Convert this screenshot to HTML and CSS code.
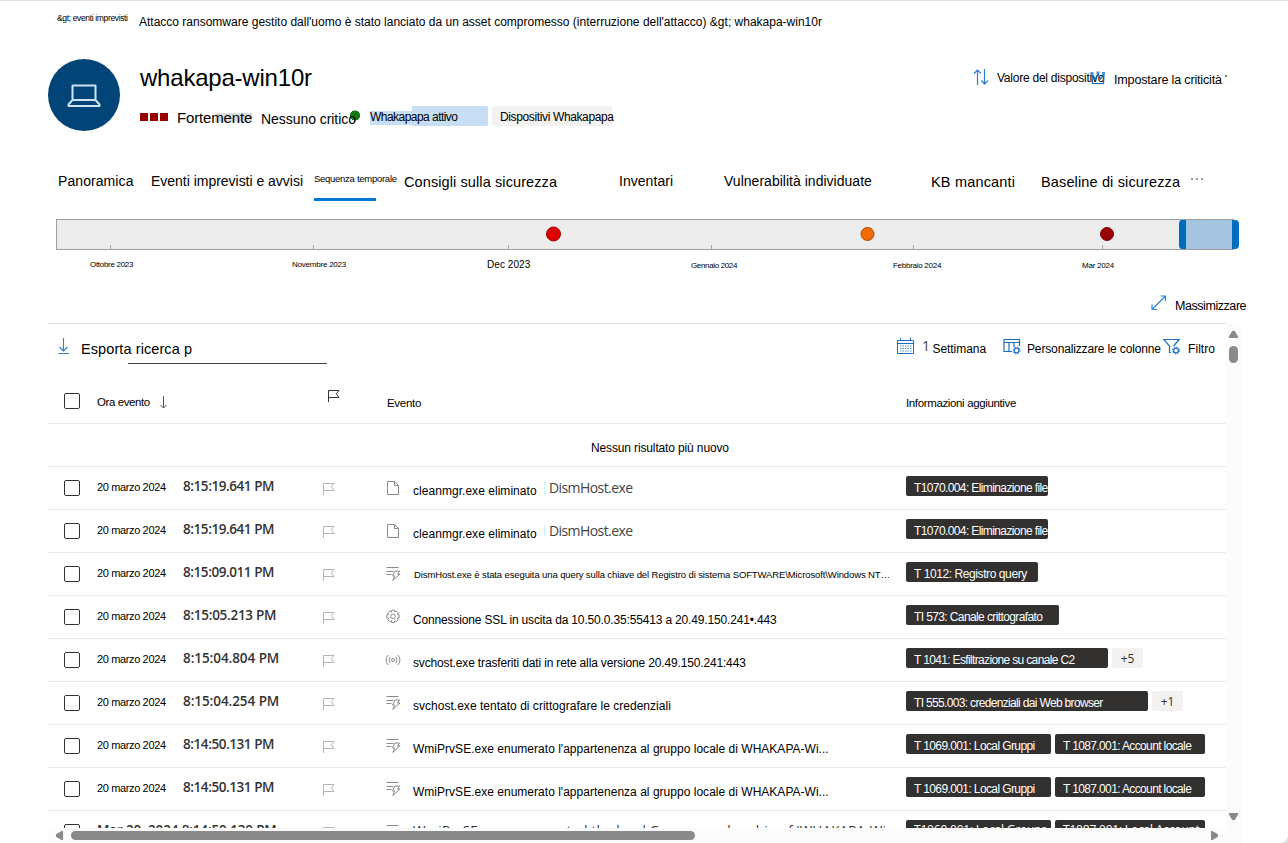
FILE: index.html
```html
<!DOCTYPE html>
<html lang="it">
<head>
<meta charset="utf-8">
<title>whakapa-win10r</title>
<link rel="stylesheet" href="styles.css">
</head>
<body>
<svg class="defs" aria-hidden="true">
  <symbol id="flag" viewBox="0 0 12 14"><path d="M.5 13V1.500H11L8.300 4.700L11 8.500H.5" fill="none" stroke="currentColor"/></symbol>
  <symbol id="doc" viewBox="0 0 14 16"><path d="M1.500 1.500H8.500L12.500 5.500V14.500H1.500ZM8.500 1.500V5.500H12.500" fill="none" stroke="currentColor"/></symbol>
  <symbol id="bolt" viewBox="0 0 15 16"><path d="M.5 1.500H12.500M.5 5.500H7.500M.5 8.500H5.500" fill="none" stroke="currentColor" stroke-width="1.200"/><path d="M9 5H13.500L11.500 8H14L6.800 14.500L8.700 10H6.500Z" fill="none" stroke="currentColor"/></symbol>
  <symbol id="gear" viewBox="0 0 16 16"><path d="M6.700 1.200h2.600l.4 1.900 1.700-1.100 1.900 1.800-1.100 1.700 2 .5v2.600l-2 .5 1.100 1.700-1.900 1.900-1.700-1.100-.4 1.900H6.700l-.4-1.900-1.700 1.100-1.900-1.900 1.100-1.700-2-.5V6l2-.5-1.100-1.700 1.900-1.800 1.700 1.100Z" fill="none" stroke="currentColor" stroke-linejoin="round"/><circle cx="8" cy="7.400" r="2.300" fill="none" stroke="currentColor"/></symbol>
  <symbol id="signal" viewBox="0 0 16 12"><path d="M3 1Q-.8 6 3 11M5.300 2.800Q2.700 6 5.300 9.200M13 1Q16.800 6 13 11M10.700 2.800Q13.300 6 10.700 9.200" fill="none" stroke="currentColor"/><circle cx="8" cy="6" r="1.500" fill="none" stroke="currentColor"/></symbol>
</svg>

<nav class="crumbs"><a class="crumb-back">&amp;gt; eventi imprevisti</a><span class="crumb-now">Attacco ransomware gestito dall'uomo è stato lanciato da un asset compromesso (interruzione dell'attacco) &amp;gt; whakapa-win10r</span></nav>

<header class="device">
  <div class="avatar"><svg width="34" height="24" viewBox="0 0 34 24"><path d="M5.500 1.500H28.500V16H5.500ZM5.500 16L1.500 20.500V22H32.500V20.500L28.500 16" fill="none" stroke="#cfe4f7" stroke-width="2" stroke-linejoin="round"/></svg></div>
  <div class="identity">
    <h1>whakapa-win10r</h1>
    <div class="status">
      <span class="risk"><i></i><i></i><i></i></span>
      <span class="level">Fort<span>emente</span></span>
      <span class="critical">Nessuno critico</span>
      <span class="chip-blue"><span>Whakapapa attivo</span></span>
      <span class="chip-gray">Dispositivi Whakapapa</span>
    </div>
  </div>
  <div class="actions">
    <svg width="16" height="18" viewBox="0 0 16 18"><path d="M4.500 17V2M1 5.500L4.500 2L8 5.500M11.500 1V16M8.500 12.500L11.500 16L15 12.500" fill="none" stroke="#2b7cd3" stroke-width="1.200"/></svg>
    <span class="value">Valore del dispositivo</span>
    <svg class="crown" width="15" height="15" viewBox="0 0 15 15"><path d="M2 3L2.500 12.500H13.500L14 3L10.500 8L8 2.500L5.500 8Z" fill="none" stroke="#0f6cbd" stroke-width="1.200"/><path d="M.5 1H3.500V4H.5ZM6.500 .5H9.500V3H6.500ZM12 1H15V4H12Z" fill="#4b94d6"/></svg>
    <span class="set">Impostare la criticità</span>
    <i class="speck"></i>
  </div>
</header>

<nav class="tabs">
  <a class="overview">Panoramica</a><a class="alerts">Eventi imprevisti e avvisi</a><a class="timeline-tab">Sequenza temporale</a><a class="advice">Consigli sulla sicurezza</a><a class="inventory">Inventari</a><a class="vulns">Vulnerabilità individuate</a><a class="kb">KB mancanti</a><a class="baseline">Baseline di sicurezza</a><span class="more"><i></i><i></i><i></i></span>
</nav>

<section class="timeline">
  <div class="track">
    <svg width="1183" height="31" viewBox="0 0 1183 31">
      <rect x=".5" y=".5" width="1177" height="30" fill="#ececec" stroke="#a0a0a0"/>
      <path d="M54.500 26V30M257.500 26V30M452.500 26V30M655.500 26V30M857.500 26V30M1046.500 26V30" stroke="#a6a6a6"/>
      <circle cx="497.500" cy="15" r="7" fill="#dc0000" stroke="#a30000"/>
      <circle cx="811.500" cy="15" r="6.500" fill="#f36a00" stroke="#a44a12"/>
      <circle cx="1051" cy="15" r="6.500" fill="#990000" stroke="#7d0a0a"/>
      <rect x="1124" y="1" width="57" height="29" fill="#a3c3e0"/>
      <path d="M1130 1V30H1126Q1123 30 1123 26V5Q1123 1 1126 1ZM1176 1V30H1179Q1183 30 1183 26V5Q1183 1 1179 1Z" fill="#006cbe"/>
    </svg>
  </div>
  <div class="months"><span class="oct">Ottobre 2023</span><span class="nov">Novembre 2023</span><span class="dec">Dec 2023</span><span class="jan">Gennaio 2024</span><span class="feb">Febbraio 2024</span><span class="mar">Mar 2024</span></div>
</section>

<div class="maximize"><svg width="16" height="16" viewBox="0 0 16 16"><path d="M1 14.500L14.500 1M9.500 1H14.500V6M1 9.500V14.500H6" fill="none" stroke="#2b88d8" stroke-width="1.200"/></svg><span>Massimizzare</span></div>

<main class="panel">
  <div class="content">
    <div class="toolbar">
      <svg class="download" width="12" height="17" viewBox="0 0 12 17"><path d="M5.500 0V13M1.500 9L5.500 13L9.500 9M.5 15.500H11" fill="none" stroke="#2b7cd3" stroke-width="1.100"/></svg>
      <span class="search">Esporta ricerca p</span>
      <svg class="calendar" width="17" height="17" viewBox="0 0 17 17"><path d="M.5 2.500H16.500V15.500H.5ZM.5 5.500H16.500M3.500 0V3M13.500 0V3" fill="none" stroke="#1b6ec2"/><path d="M3 8H14.500M3 10.500H14.500M3 13H14.500" fill="none" stroke="#4d90d0" stroke-dasharray="1.500 1"/></svg>
      <span class="one">1</span><span class="week">Settimana</span>
      <svg class="columns" width="18" height="17" viewBox="0 0 18 17"><path d="M9 13.500H1V1.500H16.500V8M1 4.500H16.500M6 4.500V13.500M11 4.500V9" fill="none" stroke="#1b6ec2" stroke-width="1.200"/><circle cx="13.500" cy="12.500" r="2.400" fill="none" stroke="#1b6ec2" stroke-width="1.200"/><circle cx="13.500" cy="12.500" r="3.600" fill="none" stroke="#1b6ec2" stroke-dasharray="1.400 1.427"/></svg>
      <span class="customize">Personalizzare le colonne</span>
      <svg class="funnel" width="18" height="17" viewBox="0 0 18 17"><path d="M8 14.500H6.500V8L.8 1.500H16.200L10.500 8" fill="none" stroke="#1b6ec2" stroke-width="1.200"/><circle cx="13" cy="12.500" r="2.400" fill="none" stroke="#1b6ec2" stroke-width="1.200"/><circle cx="13" cy="12.500" r="3.600" fill="none" stroke="#1b6ec2" stroke-dasharray="1.400 1.427"/></svg>
      <span class="filter">Filtro</span>
    </div>
    <div class="row head">
      <i class="box"></i><span class="h-time">Ora evento</span>
      <svg class="sort" width="9" height="13" viewBox="0 0 9 13"><path d="M4.500 0V12M1.500 9L4.500 12L7.500 9" fill="none" stroke="#555"/></svg>
      <svg class="flag"><use href="#flag"/></svg><span class="h-event">Evento</span><span class="h-info">Informazioni aggiuntive</span>
    </div>
    <div class="newer">Nessun risultato più nuovo</div>

    <div class="row"><i class="box"></i><span class="date">20 marzo 2024</span><span class="time tight">8:15:19.641 PM</span><svg class="flag"><use href="#flag"/></svg><svg class="kind doc"><use href="#doc"/></svg><div class="event"><span class="file">cleanmgr.exe eliminato</span><span class="target">DismHost.exe</span></div><div class="tags"><b class="w142">T1070.004: Eliminazione file</b></div></div>
    <div class="row"><i class="box"></i><span class="date">20 marzo 2024</span><span class="time tight">8:15:19.641 PM</span><svg class="flag"><use href="#flag"/></svg><svg class="kind doc"><use href="#doc"/></svg><div class="event"><span class="file">cleanmgr.exe eliminato</span><span class="target">DismHost.exe</span></div><div class="tags"><b class="w142">T1070.004: Eliminazione file</b></div></div>
    <div class="row"><i class="box"></i><span class="date">20 marzo 2024</span><span class="time tight">8:15:09.011 PM</span><svg class="flag"><use href="#flag"/></svg><svg class="kind bolt"><use href="#bolt"/></svg><div class="event small">DismHost.exe è stata eseguita una query sulla chiave del Registro di sistema SOFTWARE\Microsoft\Windows NT…</div><div class="tags"><b class="w132">T 1012: Registro query</b></div></div>
    <div class="row"><i class="box"></i><span class="date">20 marzo 2024</span><span class="time mid">8:15:05.213 PM</span><svg class="flag"><use href="#flag"/></svg><svg class="kind gear"><use href="#gear"/></svg><div class="event net">Connessione SSL in uscita da 10.50.0.35:55413 a 20.49.150.241•.443</div><div class="tags"><b class="w153">TI 573: Canale crittografato</b></div></div>
    <div class="row"><i class="box"></i><span class="date">20 marzo 2024</span><span class="time">8:15:04.804 PM</span><svg class="flag"><use href="#flag"/></svg><svg class="kind signal"><use href="#signal"/></svg><div class="event moved">svchost.exe trasferiti dati in rete alla versione 20.49.150.241:443</div><div class="tags"><b class="w202">T 1041: Esfiltrazione su canale C2</b><em>+5</em></div></div>
    <div class="row"><i class="box"></i><span class="date">20 marzo 2024</span><span class="time">8:15:04.254 PM</span><svg class="flag"><use href="#flag"/></svg><svg class="kind bolt"><use href="#bolt"/></svg><div class="event">svchost.exe tentato di crittografare le credenziali</div><div class="tags"><b class="w242">TI 555.003: credenziali dai Web browser</b><em>+1</em></div></div>
    <div class="row"><i class="box"></i><span class="date">20 marzo 2024</span><span class="time tight">8:14:50.131 PM</span><svg class="flag"><use href="#flag"/></svg><svg class="kind bolt"><use href="#bolt"/></svg><div class="event">WmiPrvSE.exe enumerato l'appartenenza al gruppo locale di WHAKAPA-Wi...</div><div class="tags"><b class="w145">T 1069.001: Local Gruppi</b><b class="w150">T 1087.001: Account locale</b></div></div>
    <div class="row"><i class="box"></i><span class="date">20 marzo 2024</span><span class="time tight">8:14:50.131 PM</span><svg class="flag"><use href="#flag"/></svg><svg class="kind bolt"><use href="#bolt"/></svg><div class="event">WmiPrvSE.exe enumerato l'appartenenza al gruppo locale di WHAKAPA-Wi...</div><div class="tags"><b class="w145">T 1069.001: Local Gruppi</b><b class="w150">T 1087.001: Account locale</b></div></div>
    <div class="row last"><i class="box"></i><span class="stamp">Mar 20, 2024 8:14:50.130 PM</span><svg class="flag"><use href="#flag"/></svg><svg class="kind bolt"><use href="#bolt"/></svg><div class="event english">WmiPrvSE.exe enumerated the local Group membership of 'WHAKAPA-Wi...</div><div class="tags"><b class="w145 en">T1069.001: Local Groups</b><b class="w150 en">T1087.001: Local Account</b></div></div>
  </div>
  <div class="vbar"><i class="up"></i><i class="thumb"></i><i class="down"></i></div>
  <div class="hbar"><i class="left"></i><i class="thumb"></i><i class="right"></i></div>
</main>
</body>
</html>
```
FILE: styles.css
```css
* { box-sizing: border-box; }
body {
  margin: 0; width: 1288px; height: 843px; overflow: hidden; position: relative;
  background: #fff; color: #000; border-top: 1px solid #e3e3e3;
  font: 12px/20px "Liberation Sans", Arial, sans-serif; white-space: nowrap;
}
body::after {
  content: ""; position: absolute; right: 0; bottom: 0; width: 8px; height: 8px;
  background: radial-gradient(circle at 0 0, transparent 7.500px, #ddd 8.500px);
}
svg { display: block; }
.defs { position: absolute; width: 0; height: 0; }

.crumbs { display: grid; grid-template-columns: 82px 1fr; height: 58px; padding-left: 57px; align-items: start; }
.crumb-back { font-size: 8.5px; letter-spacing: -.353px; padding-top: 7px; }
.crumb-now { padding-top: 11px; }

.device { display: grid; grid-template-columns: 92px 833px 1fr; padding-left: 48px; height: 110px; }
.avatar { width: 72px; height: 72px; border-radius: 50%; background: #014478; display: grid; place-items: center; padding-top: 2px; }
h1 { margin: 4px 0 0; font-weight: 400; font-size: 24px; line-height: 30px; letter-spacing: -.212px; }
.status { display: grid; grid-template-columns: 37px 84px 109px 122px 120px; margin-top: 13px; align-items: start; }
.risk { display: flex; gap: 2px; padding-top: 7px; }
.risk i { width: 8px; height: 8px; background: #980000; }
.level { font-size: 15px; letter-spacing: -.15px; padding-top: 2px; }
.level span { background: linear-gradient(#dcdcdc, #dcdcdc) 12px 4px / 40px 9px no-repeat; }
.critical { font-size: 14px; letter-spacing: -.05px; padding-top: 3px; height: 23px; background: radial-gradient(circle at 94px 9.500px, #107c10 4.800px, transparent 5.300px); }
.chip-blue { width: 118px; height: 20px; background: linear-gradient(#c7dff4, #c7dff4) 0 5px / 43px 14px no-repeat, linear-gradient(#c7dff4, #c7dff4) 42px 0 / 76px 20px no-repeat; border-radius: 2px; }
.chip-blue span, .chip-gray { font-size: 12px; line-height: 22px; letter-spacing: -.537px; }
.chip-gray { letter-spacing: -.369px; background: #f3f2f1; border-radius: 2px; height: 20px; padding-left: 8px; }
.actions { display: grid; grid-template-columns: 24px 93px 24px 110px 6px; align-items: start; padding-top: 9px; }
.value { letter-spacing: -.24px; }
.crown { margin-top: 3px; }
.set { font-size: 12.5px; letter-spacing: -.15px; padding-top: 2px; }
.speck { width: 2px; height: 2px; background: #777; margin: 7px 0 0 1px; }

.tabs { display: grid; grid-template-columns: 93px 163px 90px 215px 105px 207px 110px 149px 20px; padding-left: 58px; height: 50px; font-size: 14px; align-items: start; }
.tabs a { padding-top: 3px; }
.tabs .overview, .tabs .alerts { padding-top: 2px; }
.overview { letter-spacing: .08px; }
.alerts { letter-spacing: -.02px; }
.tabs .timeline-tab { font-size: 9.5px; letter-spacing: -.275px; padding: 0; width: 62px; height: 32px; border-bottom: 3px solid #0078d4; }
.advice { font-size: 14.5px; letter-spacing: .1px; }
.inventory { font-size: 14px; letter-spacing: .04px; }
.vulns { font-size: 14px; letter-spacing: .02px; }
.tabs .inventory, .tabs .vulns { padding-top: 2px; }
.kb { font-size: 14.5px; letter-spacing: .179px; }
.baseline { font-size: 14.5px; letter-spacing: .14px; }
.more { display: flex; gap: 3px; padding: 9px 0 0 1px; }
.more i { width: 2px; height: 2px; background: #999; }

.timeline { padding-left: 56px; height: 76px; }
.track { height: 31px; }
.months { display: grid; grid-template-columns: 202px 195px 204px 202px 189px 60px; padding: 5px 0 0 34px; font-size: 8px; }
.oct { letter-spacing: -.3px; }
.nov { letter-spacing: -.22px; }
.dec { font-size: 10px; letter-spacing: .06px; }
.jan { letter-spacing: -.35px; padding-top: 1px; }
.feb { letter-spacing: -.27px; padding-top: 1px; }
.mar { letter-spacing: -.22px; padding-top: 1px; }

.maximize { display: grid; grid-template-columns: 24px 71px; padding-left: 1151px; height: 28px; font-size: 12.5px; letter-spacing: -.44px; }
.maximize span { padding-top: 1px; }

.panel { display: grid; grid-template: 505px 15px / 1178px 15px; margin-left: 48px; }
.content { border-top: 1px solid #e1e1e1; overflow: hidden; }
.toolbar { display: grid; grid-template-columns: 33px 816px 25px 10.500px 70.500px 24px 136px 25px 30px; height: 56px; align-items: start; }
.toolbar > svg { margin-top: 14px; }
.download { margin-left: 10px; }
.search { font-size: 14.5px; letter-spacing: .09px; height: 40px; padding-top: 15px; background: linear-gradient(#444, #444) 47px 39px / 199px 1px no-repeat; }
.one { font: 14px/20px "Open Sans", sans-serif; color: #444; padding-top: 12px; }
.week, .customize, .filter { padding-top: 15px; }
.week { letter-spacing: -.06px; }
.customize { letter-spacing: -.142px; }
.filter { letter-spacing: .067px; }

.row { display: grid; grid-template-columns: 49px 86px 140px 63px 27px 493px 320px; height: 43px; border-bottom: 1px solid #eaeaea; align-items: start; }
.box { width: 16px; height: 16px; margin: 13px 0 0 16px; border: 1px solid #333; border-radius: 2px; }
.date { font-size: 11px; letter-spacing: -.365px; padding-top: 10px; }
.time, .stamp { font: 600 13.5px/20px "Open Sans", sans-serif; letter-spacing: -.06px; color: #333; padding-top: 9px; }
.time.tight { letter-spacing: -.43px; }
.time.mid { letter-spacing: -.28px; }
.flag { width: 12px; height: 14px; color: #b5b5b5; margin-top: 15px; }
.kind { color: #8a8a8a; }
.doc { width: 14px; height: 16px; margin-top: 13px; }
.bolt { width: 15px; height: 16px; margin-top: 13px; }
.gear { width: 16px; height: 16px; margin: 13px 0 0 -1px; }
.signal { width: 16px; height: 12px; margin: 15px 0 0 -1px; }
.event { padding-top: 14px; letter-spacing: .02px; }
.event:has(.target) { display: grid; grid-template-columns: 131px 1fr; align-items: start; padding-top: 11px; }
.file { letter-spacing: .04px; padding-top: 3px; }
.target { font: 14px/12px "Open Sans", sans-serif; letter-spacing: -.58px; color: #444; border-left: 1px solid #c9f4fa; margin-top: 4px; padding-left: 4px; }
.small { font-size: 9.5px; letter-spacing: -.113px; padding: 12px 0 0 1px; }
.net { letter-spacing: -.16px; }
.moved { letter-spacing: -.152px; }
.tags { display: flex; gap: 4px; padding-top: 9px; }
.tags b { height: 20px; padding-left: 8px; border-radius: 2px; background: #323130; color: #fff; font-weight: 400; font-size: 12px; line-height: 24px; letter-spacing: -.61px; }
.tags em { height: 20px; width: 31px; border-radius: 2px; background: #f3f2f1; color: #333; font: 12px/21px "Open Sans", sans-serif; text-align: center; }
.tags .w142 { width: 142px; }
.tags .w132 { width: 132px; letter-spacing: -.41px; }
.w153 { width: 153px; }
.tags .w202 { width: 202px; letter-spacing: -.65px; }
.tags .w242 { width: 242px; letter-spacing: -.665px; }
.w145 { width: 145px; }
.tags .w150 { width: 150px; letter-spacing: -.63px; }
.tags .en { font: 12px/20px "Open Sans", sans-serif; letter-spacing: -.2px; }

.head { height: 44px; grid-template-columns: 49px 62px 169px 59px 519px 320px; font-size: 11.5px; }
.head .flag { color: #333; margin-top: 9px; }
.h-time { letter-spacing: -.41px; padding-top: 12px; }
.sort { margin-top: 16px; }
.h-event { letter-spacing: -.3px; padding-top: 13px; }
.h-info { letter-spacing: -.36px; padding-top: 13px; }
.newer { height: 43px; border-bottom: 1px solid #eaeaea; padding: 14px 0 0 543px; letter-spacing: -.137px; }
.last { grid-template-columns: 49px 226px 63px 27px 493px 320px; }
.stamp { letter-spacing: -.15px; }
.english { font: 13.5px/20px "Open Sans", sans-serif; color: #333; padding-top: 9px; letter-spacing: .17px; }

.vbar { background: #fbfbfb; display: flex; flex-direction: column; padding: 7px 0 8px 3px; margin-top: 1px; }
.vbar i, .hbar i { display: block; background: #8a8a8a; }
.up, .down { width: 9px; height: 7px; }
.up { clip-path: polygon(35% 0, 65% 0, 100% 80%, 100% 100%, 0 100%, 0 80%); }
.down { clip-path: polygon(0 0, 100% 0, 100% 20%, 65% 100%, 35% 100%, 0 20%); margin-top: auto; }
.vbar .thumb { width: 9px; height: 17px; border-radius: 5px; margin-top: 8px; }
.hbar { grid-column: 1 / 3; background: #fbfbfb; display: flex; align-items: center; padding: 0 23px 0 8px; }
.left, .right { width: 7px; height: 9px; }
.left { clip-path: polygon(0 35%, 80% 0, 100% 0, 100% 100%, 80% 100%, 0 65%); }
.right { clip-path: polygon(0 0, 20% 0, 100% 35%, 100% 65%, 20% 100%, 0 100%); margin-left: auto; }
.hbar .thumb { width: 624px; height: 9px; border-radius: 5px; margin-left: 8px; }
```
